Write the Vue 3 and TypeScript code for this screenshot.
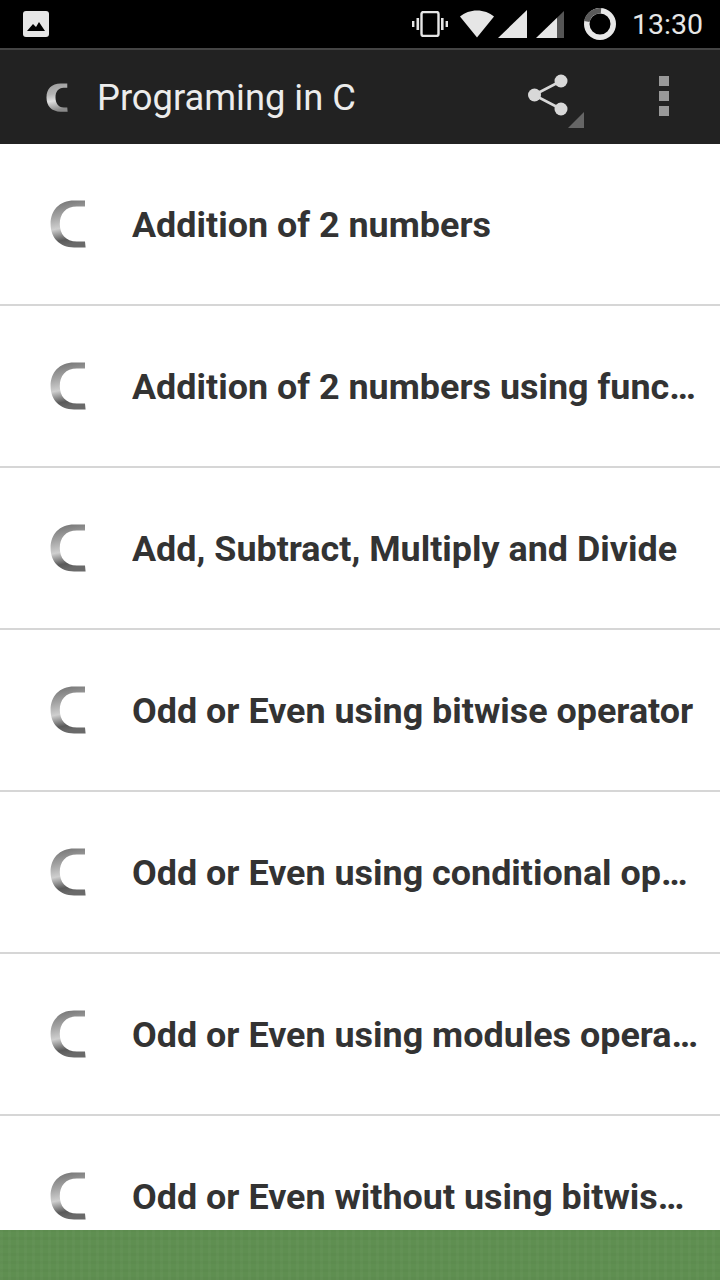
<script setup lang="ts">
const items: string[] = [
  "Addition of 2 numbers",
  "Addition of 2 numbers using function",
  "Add, Subtract, Multiply and Divide",
  "Odd or Even using bitwise operator",
  "Odd or Even using conditional operator",
  "Odd or Even using modules operator",
  "Odd or Even without using bitwise operator",
];

const logoPath =
  "M35 .6H24C9.500.6.6 10.400.6 24S9.500 47.400 24 47.400h11.600L35 41.500H27C15.500 41.500 9.800 34 9.800 24S15.500 6.600 27 6.600h8Z";
const barLogoPath =
  "M35 1H24C9 1 .6 10 .6 24S9 47.400 24 47.400h11.600L35 40.500H29C20 40.500 15.500 33 15.500 24S20 8 29 8h6Z";
</script>

<template>
  <div class="screen">
    <header class="status-bar">
      <svg class="notif" width="26" height="26" viewBox="0 0 26 26">
        <rect width="26" height="26" rx="3" fill="#e6e6e6" />
        <path d="M4 20l6-7 3 3 3-5 6 9Z" fill="#000" />
      </svg>
      <div class="status-icons">
        <svg width="36" height="26" viewBox="0 0 36 26">
          <rect x="9.500" y="1" width="17" height="24" rx="2" fill="none" stroke="#e6e6e6" stroke-width="2.400" />
          <path d="M4.500 7h2.600v12H4.500ZM29 7h2.600v12H29ZM0 10h2.400v6H0ZM33.600 10H36v6h-2.400Z" fill="#e6e6e6" />
        </svg>
        <svg class="wifi" width="34" height="28" viewBox="0 0 34 28">
          <path d="M17 27.500 0 6.500C4.500 2.800 10.500.5 17 .5s12.500 2.300 17 6Z" fill="#e6e6e6" />
        </svg>
        <svg class="signal" width="29" height="28" viewBox="0 0 29 28">
          <path d="M0 28 29 0v28Z" fill="#e6e6e6" />
        </svg>
        <svg class="signal-2" width="28" height="28" viewBox="0 0 28 28">
          <path d="M0 28 21 7.700V28Z" fill="#e6e6e6" />
          <path d="M21 7.700 28 1v27h-7Z" fill="#555" />
        </svg>
        <svg class="ring" width="32" height="32" viewBox="0 0 32 32">
          <circle cx="16" cy="16" r="13.250" fill="none" stroke="#e8e8e8" stroke-width="5.500" />
          <path d="M2.800 13.500A13.250 13.250 0 0 1 17 2.800" fill="none" stroke="#5a5a5a" stroke-width="5.500" />
        </svg>
        <span class="clock">13:30</span>
      </div>
    </header>

    <nav class="app-bar">
      <svg class="bar-logo" width="22" height="29" viewBox="0 0 36 48">
        <defs>
          <linearGradient id="metal" x1="0" y1="0" x2="0.15" y2="1">
            <stop offset="0" stop-color="#6f6f6f" />
            <stop offset="0.35" stop-color="#a2a2a2" />
            <stop offset="0.62" stop-color="#cfcfcf" />
            <stop offset="0.88" stop-color="#5a5a5a" />
            <stop offset="1" stop-color="#6a6a6a" />
          </linearGradient>
          <linearGradient id="metal-bar" x1="0" y1="0" x2="0.15" y2="1">
            <stop offset="0" stop-color="#9c9c9c" />
            <stop offset="0.4" stop-color="#b4b4b4" />
            <stop offset="0.65" stop-color="#e0e0e0" />
            <stop offset="1" stop-color="#8a8a8a" />
          </linearGradient>
        </defs>
        <path :d="barLogoPath" fill="url(#metal-bar)" />
      </svg>
      <h1 class="title">Programing in C</h1>
      <div class="share">
        <svg width="56" height="56" viewBox="0 0 56 56">
          <path d="M33 7 6 21l27 14" fill="none" stroke="#d8d8d8" stroke-width="2.600" />
          <circle cx="33" cy="7" r="6.500" fill="#d8d8d8" />
          <circle cx="6.500" cy="21" r="6.500" fill="#d8d8d8" />
          <circle cx="33" cy="35" r="6.500" fill="#d8d8d8" />
          <path d="M40 54h16V38Z" fill="#666" />
        </svg>
      </div>
      <div class="overflow">
        <span class="dot"></span>
        <span class="dot"></span>
        <span class="dot"></span>
      </div>
    </nav>

    <ul class="list">
      <li v-for="item in items" :key="item" class="row">
        <svg class="row-logo" width="36" height="48" viewBox="0 0 36 48">
          <path :d="logoPath" fill="url(#metal)" />
        </svg>
        <span class="label">{{ item }}</span>
      </li>
    </ul>

    <div class="ad-banner"></div>
  </div>
</template>

<style scoped>
.screen {
  display: flex;
  flex-direction: column;
  width: 720px;
  height: 1280px;
  overflow: hidden;
  background: #fff;
  font-family: Roboto, "Liberation Sans", sans-serif;
}

.status-bar {
  flex: none;
  display: flex;
  align-items: center;
  justify-content: space-between;
  height: 48px;
  padding: 0 17px 0 23px;
  background: #000;
}

.status-icons {
  display: flex;
  align-items: center;
}

.wifi {
  margin-left: 12px;
}

.signal {
  margin-left: 4px;
}

.signal-2 {
  margin-left: 9px;
}

.ring {
  margin-left: 20px;
}

.clock {
  margin-left: 16px;
  color: #e6e6e6;
  font-size: 28.500px;
}

.app-bar {
  flex: none;
  display: flex;
  align-items: center;
  height: 94px;
  padding-left: 46px;
  border-top: 2px solid #444;
  background: #222;
}

.title {
  flex: 1;
  margin: 0 0 0 29px;
  color: #ececec;
  font-size: 36.300px;
  font-weight: 400;
}

.share {
  display: flex;
  margin-right: 75px;
  padding-top: 10px;
}

.overflow {
  display: flex;
  flex-direction: column;
  gap: 5px;
  margin: 0 51px 2px 0;
}

.dot {
  width: 10px;
  height: 10px;
  background: #999;
}

.list {
  flex: 1;
  min-height: 0;
  margin: 0;
  padding: 0;
  overflow: hidden;
  list-style: none;
}

.row {
  display: flex;
  align-items: center;
  box-sizing: border-box;
  height: 162px;
  padding: 0 20px 0 50px;
  border-bottom: 2px solid #d6d6d6;
}

.row-logo {
  flex: none;
}

.label {
  flex: 1;
  min-width: 0;
  margin-left: 46px;
  padding-top: 2px;
  overflow: hidden;
  color: #333;
  font-size: 35.900px;
  font-weight: 700;
  text-overflow: ellipsis;
  white-space: nowrap;
}

.ad-banner {
  flex: none;
  height: 50px;
  background-color: #5f8f51;
  background-image:
    repeating-linear-gradient(90deg, rgba(255, 255, 255, 0.025) 0 3px, transparent 3px 8px),
    repeating-linear-gradient(0deg, rgba(0, 0, 0, 0.025) 0 3px, transparent 3px 8px);
}
</style>
